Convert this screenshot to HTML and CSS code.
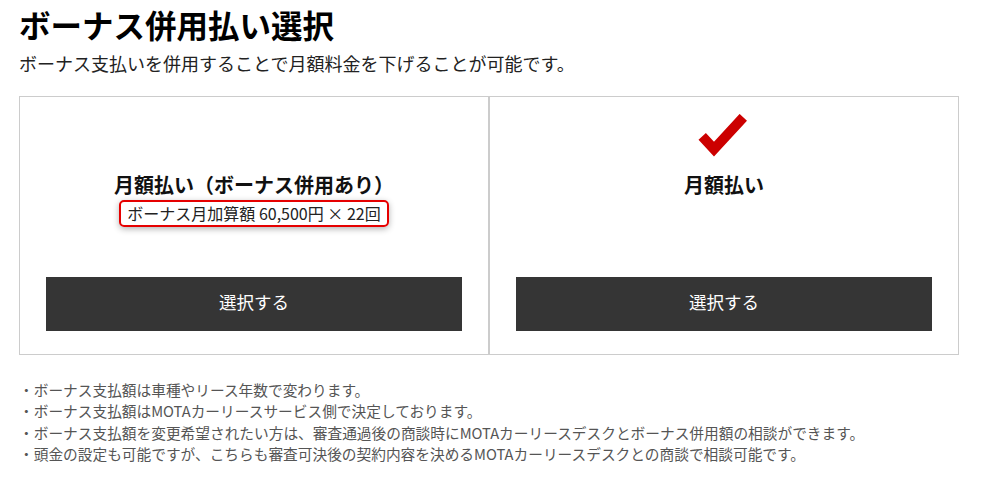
FILE: index.html
```html
<!DOCTYPE html>
<html lang="ja">
<head>
<meta charset="utf-8">
<link rel="stylesheet" href="styles.css">
</head>
<body>
<div class="page">
  <h1 class="title">ボーナス併用払い選択</h1>
  <p class="lead">ボーナス支払いを併用することで月額料金を下げることが可能です。</p>
  <div class="cards">
    <div class="card">
      <svg class="check hidden" width="52" height="44" viewBox="0 0 52 44"><polyline points="4.2,22.3 16,35.2 45.3,3.3" fill="none" stroke="#cc0000" stroke-width="10" stroke-linejoin="miter"/></svg>
      <div class="card-title">月額払い（ボーナス併用あり）</div>
      <div class="badge">ボーナス月加算額 60,500円 × 22回</div>
      <button class="btn">選択する</button>
    </div>
    <div class="card">
      <svg class="check" width="52" height="44" viewBox="0 0 52 44"><polyline points="4.2,22.3 16,35.2 45.3,3.3" fill="none" stroke="#cc0000" stroke-width="10" stroke-linejoin="miter"/></svg>
      <div class="card-title">月額払い</div>
      <button class="btn">選択する</button>
    </div>
  </div>
  <ul class="notes">
    <li>・ボーナス支払額は車種やリース年数で変わります。</li>
    <li>・ボーナス支払額はMOTAカーリースサービス側で決定しております。</li>
    <li>・ボーナス支払額を変更希望されたい方は、審査通過後の商談時にMOTAカーリースデスクとボーナス併用額の相談ができます。</li>
    <li>・頭金の設定も可能ですが、こちらも審査可決後の契約内容を決めるMOTAカーリースデスクとの商談で相談可能です。</li>
  </ul>
</div>
</body>
</html>
```
FILE: styles.css
```css
* { box-sizing: border-box; }
html, body { margin: 0; padding: 0; background: #fff; }
body {
  font-family: "Noto Sans CJK JP", "Noto Sans", sans-serif;
  color: #111;
}
.page { padding: 0 19px; width: 978px; }
.title {
  margin: 0;
  font-size: 31.5px;
  line-height: 48px;
  font-weight: 700;
  color: #000;
}
.lead {
  margin: 1px 0 0;
  font-size: 18px;
  line-height: 28px;
  color: #222;
}
.cards {
  margin-top: 19px;
  display: flex;
  width: 940px;
}
.card {
  width: 470px;
  height: 259px;
  border: 1px solid #ccc;
  padding: 17px 26px 23px;
  display: flex;
  flex-direction: column;
  align-items: center;
}
.check { display: block; flex: none; }
.check.hidden { visibility: hidden; }
.card-title {
  margin-top: 14px;
  font-size: 20px;
  line-height: 26px;
  font-weight: 700;
  color: #111;
}
.badge {
  margin-top: 2px;
  border: 2px solid #e60000;
  border-radius: 5px;
  padding: 0 6px;
  font-size: 16px;
  line-height: 23px;
  color: #222;
  box-shadow: 0 2px 6px rgba(0,0,0,0.3);
}
.btn {
  margin-top: auto;
  width: 100%;
  height: 54px;
  border: 0;
  background: #353535;
  color: #fff;
  font-family: inherit;
  font-size: 17.5px;
  padding: 0 0 5px;
}
.notes {
  list-style: none;
  margin: 24px 0 0;
  padding: 0;
  font-size: 14.7px;
  line-height: 21.3px;
  color: #555;
}
```
